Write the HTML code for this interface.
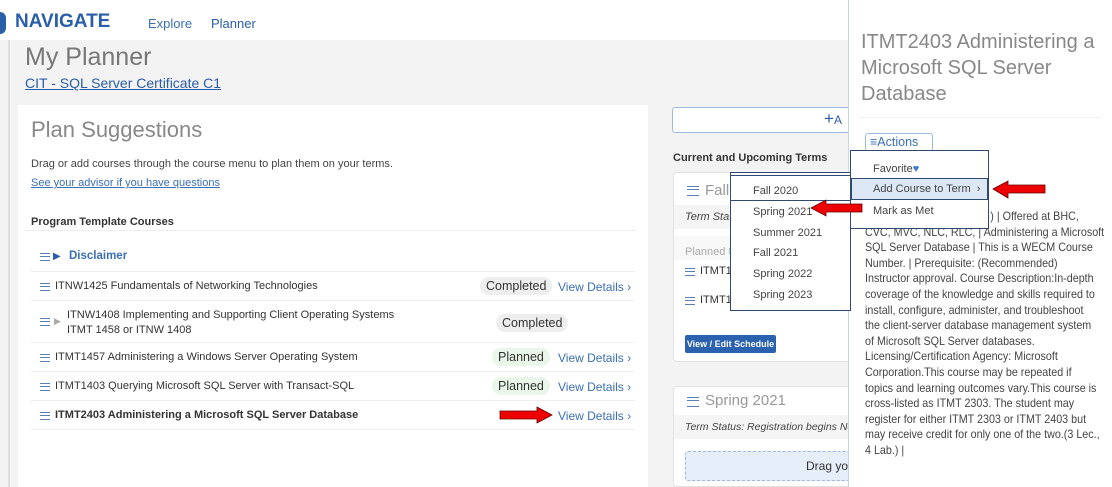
<!DOCTYPE html>
<html><head><meta charset="utf-8"><style>
*{margin:0;padding:0;box-sizing:border-box}
body{width:1112px;height:487px;overflow:hidden;position:relative;background:#f3f3f3;font-family:"Liberation Sans",sans-serif;color:#333}
.a{position:absolute;white-space:nowrap}
.hb{position:absolute;width:10px;height:8px;border-top:1.5px solid #5a7fb5;border-bottom:1.5px solid #5a7fb5}
.hb:after{content:"";position:absolute;left:0;right:0;top:2px;border-top:1.5px solid #5a7fb5}
.row{position:absolute;left:31px;width:604px;border-bottom:1px solid #eee}
.vd{position:absolute;font-size:12px;color:#3b6fb6}
.pill{position:absolute;font-size:12.5px;padding:2px 6px;border-radius:9px;color:#333}
.t{font-size:11px;color:#333}
.para{position:absolute;left:865px;top:209px;font-size:12px;color:#444;line-height:15.6px;white-space:nowrap;transform:scaleX(0.895);transform-origin:0 0}
</style></head><body>
<div class="a" style="left:0;top:0;width:1112px;height:40px;background:#fff"></div>
<div class="a" style="left:0;top:12px;width:6px;height:22px;background:#2a5ea8;border-radius:0 11px 11px 0"></div>
<div class="a" style="left:15px;top:11px;font-size:19px;font-weight:bold;color:#2a5ea8">NAVIGATE</div>
<div class="a" style="left:148px;top:16px;font-size:13px;color:#3b6fb6">Explore</div>
<div class="a" style="left:211px;top:16px;font-size:13px;color:#2a5ea8">Planner</div>
<div class="a" style="left:8px;top:40px;width:2px;height:447px;background:#ddd"></div>
<div class="a" style="left:25px;top:43px;font-size:25px;color:#777;font-weight:300">My Planner</div>
<div class="a" style="left:25px;top:75px;font-size:14px;color:#2a5ea8;text-decoration:underline">CIT - SQL Server Certificate C1</div>
<div class="a" style="left:18px;top:105px;width:630px;height:382px;background:#fff"></div>
<div class="a" style="left:31px;top:117px;font-size:22px;color:#888">Plan Suggestions</div>
<div class="a t" style="left:31px;top:158px;color:#444">Drag or add courses through the course menu to plan them on your terms.</div>
<div class="a t" style="left:31px;top:177px;color:#3b6fb6;text-decoration:underline">See your advisor if you have questions</div>
<div class="a" style="left:31px;top:216px;font-size:11px;font-weight:bold;color:#333">Program Template Courses</div>
<div class="a" style="left:24px;top:230px;width:612px;border-top:1px solid #eee"></div>
<div class="row" style="top:241px;height:31px"><div class="hb" style="left:9px;top:12px"></div><div class="a" style="left:22px;top:10px;font-size:10px;color:#2a5ea8">▶</div><div class="a" style="left:38px;top:9px;font-size:11.5px;font-weight:bold;color:#3b6fb6">Disclaimer</div></div>
<div class="row" style="top:272px;height:29px"><div class="hb" style="left:9px;top:11px"></div><div class="a t" style="left:24px;top:8px">ITNW1425 Fundamentals of Networking Technologies</div><div class="pill" style="left:449px;top:5px;background:#eee">Completed</div><div class="vd" style="left:527px;top:8px">View Details ›</div></div>
<div class="row" style="top:301px;height:42px"><div class="hb" style="left:9px;top:17px"></div><div class="a" style="left:23px;top:15px;font-size:9px;color:#aaa">▶</div><div class="a t" style="left:36px;top:7px;line-height:15px">ITNW1408 Implementing and Supporting Client Operating Systems<br>ITMT 1458 or ITNW 1408</div><div class="pill" style="left:465px;top:13px;background:#eee">Completed</div></div>
<div class="row" style="top:343px;height:29px"><div class="hb" style="left:9px;top:11px"></div><div class="a t" style="left:24px;top:8px">ITMT1457 Administering a Windows Server Operating System</div><div class="pill" style="left:461px;top:5px;background:#eaf6ea">Planned</div><div class="vd" style="left:527px;top:8px">View Details ›</div></div>
<div class="row" style="top:372px;height:29px"><div class="hb" style="left:9px;top:11px"></div><div class="a t" style="left:24px;top:8px">ITMT1403 Querying Microsoft SQL Server with Transact-SQL</div><div class="pill" style="left:461px;top:5px;background:#eaf6ea">Planned</div><div class="vd" style="left:527px;top:8px">View Details ›</div></div>
<div class="row" style="top:401px;height:29px"><div class="hb" style="left:9px;top:11px"></div><div class="a t" style="left:24px;top:8px;font-weight:bold">ITMT2403 Administering a Microsoft SQL Server Database</div><div class="vd" style="left:527px;top:8px">View Details ›</div></div>
<!-- right column -->
<div class="a" style="left:672px;top:107px;width:200px;height:26px;background:#fff;border:1px solid #9fb8dc;border-radius:3px"></div>
<div class="a" style="left:824px;top:109px;font-size:17px;color:#2a5ea8">+<span style="font-size:12px">A</span></div>
<div class="a" style="left:673px;top:152px;font-size:11px;font-weight:bold;color:#333">Current and Upcoming Terms</div>
<div class="a" style="left:673px;top:172px;width:200px;height:190px;background:#fff;border:1px solid #e2e2e2;border-radius:4px"></div>
<div class="hb" style="left:687px;top:186px;width:12px;height:10px"></div>
<div class="a" style="left:705px;top:182px;font-size:15px;color:#999">Fall</div>
<div class="a" style="left:674px;top:205px;width:198px;height:24px;background:#f5f5f5"></div>
<div class="a" style="left:685px;top:211px;font-size:11px;font-style:italic;color:#444">Term Stat</div>
<div class="a" style="left:674px;top:236px;width:198px;height:24px;background:#f8f8f8"></div>
<div class="a" style="left:685px;top:243px;font-size:11px;color:#aaa">Planned <span style="color:#3b6fb6">ⓘ</span></div>
<div class="hb" style="left:685px;top:268px"></div><div class="a t" style="left:700px;top:265px">ITMT14</div>
<div class="hb" style="left:685px;top:297px"></div><div class="a t" style="left:700px;top:294px">ITMT14</div>
<div class="a" style="left:685px;top:335px;width:91px;height:18px;background:#2a62b0;border-radius:2px;color:#fff;font-size:9px;font-weight:bold;text-align:center;line-height:18px">View / Edit Schedule</div>
<div class="a" style="left:673px;top:386px;width:200px;height:101px;background:#fff;border:1px solid #e2e2e2;border-radius:4px"></div>
<div class="hb" style="left:687px;top:397px;width:12px;height:10px"></div>
<div class="a" style="left:705px;top:392px;font-size:15px;color:#999">Spring 2021</div>
<div class="a" style="left:674px;top:415px;width:198px;height:24px;background:#f5f5f5"></div>
<div class="a" style="left:685px;top:421px;font-size:10.5px;font-style:italic;color:#444">Term Status: Registration begins No</div>
<div class="a" style="left:685px;top:451px;width:190px;height:30px;background:#e6eef9;border:1px dashed #9fb8dc;border-radius:3px"></div>
<div class="a" style="left:806px;top:459px;font-size:12px;color:#333">Drag yo</div>
<!-- right overlay -->
<div class="a" style="left:848px;top:0;width:264px;height:487px;background:#fff;border-left:1px solid #c9d8ee"></div>
<div class="a" style="left:861px;top:29px;font-size:20px;color:#888;line-height:26px;white-space:normal;width:250px">ITMT2403 Administering a Microsoft SQL Server Database</div>
<div class="a" style="left:860px;top:117px;width:240px;border-top:1px solid #f0f0f0"></div>
<div class="a" style="left:865px;top:133px;width:68px;height:19px;border:1px solid #9fb8dc;border-radius:3px;font-size:12.5px;color:#3b6fb6;line-height:17px;padding-left:4px">≡Actions</div>
<div class="para"><span style="margin-left:140px">) | Offered at BHC,</span><br>CVC, MVC, NLC, RLC, | Administering a Microsoft<br>SQL Server Database | This is a WECM Course<br>Number. | Prerequisite: (Recommended)<br>Instructor approval. Course Description:In-depth<br>coverage of the knowledge and skills required to<br>install, configure, administer, and troubleshoot<br>the client-server database management system<br>of Microsoft SQL Server databases.<br>Licensing/Certification Agency: Microsoft<br>Corporation.This course may be repeated if<br>topics and learning outcomes vary.This course is<br>cross-listed as ITMT 2303. The student may<br>register for either ITMT 2303 or ITMT 2403 but<br>may receive credit for only one of the two.(3 Lec.,<br>4 Lab.) |</div>
<!-- actions menu -->
<div class="a" style="left:850px;top:150px;width:139px;height:79px;background:#fff;border:1.5px solid #2f4a6e"></div>
<div class="a" style="left:873px;top:163px;font-size:11px;color:#444">Favorite<span style="color:#3b7bd0">♥</span></div>
<div class="a" style="left:851px;top:178px;width:137px;height:22px;background:#dde8f6;border:1.5px solid #2f4a6e"></div>
<div class="a" style="left:873px;top:183px;font-size:11px;color:#444">Add Course to Term &nbsp;›</div>
<div class="a" style="left:873px;top:205px;font-size:11px;color:#444">Mark as Met</div>
<!-- term menu -->
<div class="a" style="left:730px;top:172px;width:121px;height:139px;background:#fff;border:1.5px solid #2f4a6e"></div>
<div class="a" style="left:730px;top:175px;width:121px;height:26px;border:1.5px solid #2f4a6e"></div>
<div class="a" style="left:753px;top:181px;font-size:11px;color:#444;line-height:20.8px">Fall 2020<br>Spring 2021<br>Summer 2021<br>Fall 2021<br>Spring 2022<br>Spring 2023</div>
<!-- arrows -->
<svg class="a" style="left:0;top:0" width="1112" height="487">
<g fill="#e00" stroke="#600" stroke-width="0.8">
<polygon points="811,208 826,200 826,204 862,204 862,212 826,212 826,216"/>
<polygon points="993,189 1008,181 1008,185 1045,185 1045,193 1008,193 1008,198"/>
<polygon points="552,415 537,407 537,411 500,411 500,419 537,419 537,423"/>
</g></svg>
</body></html>
